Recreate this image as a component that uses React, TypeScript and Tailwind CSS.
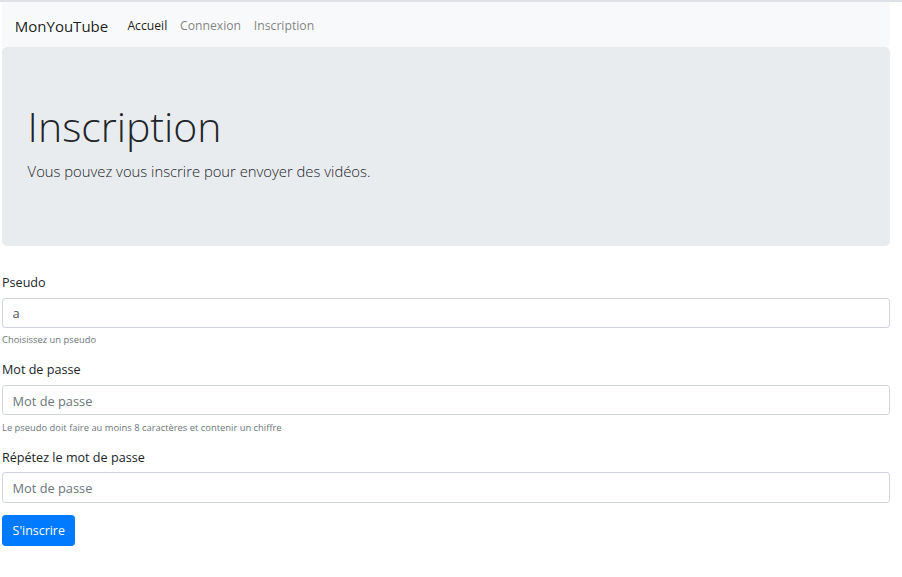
const font = { fontFamily: '"Open Sans", "Noto Sans", sans-serif' };

function Field({
  label,
  value,
  placeholder,
  help,
}: {
  label: string;
  value?: string;
  placeholder?: string;
  help?: string;
}) {
  return (
    <div className="mb-[12.8px]">
      <label className="block pt-[1px] mb-[5.4px] text-[12.6px] leading-[19.2px] text-[#212529]">{label}</label>
      <input
        type="text"
        readOnly
        defaultValue={value}
        placeholder={placeholder}
        className="block w-full h-[30.4px] px-[9.6px] pt-[1px] text-[12.8px] text-[#495057] placeholder:text-[#6c757d] bg-white border border-[#ced4da] rounded-[3.2px] outline-none"
        style={font}
      />
      {help && (
        <small className="block mt-[4.5px] mb-[-1.3px] text-[9.4px] leading-[15.36px] text-[#6c757d]">{help}</small>
      )}
    </div>
  );
}

export default function App() {
  return (
    <div className="min-h-[577px] bg-white border-t-2 border-[#dee2e6]" style={font}>
      <div className="w-[888px] ml-[2px]">
        {/* Navbar */}
        <nav className="h-[45px] flex items-center px-[12.8px] pt-[3px] bg-[#f8f9fa]">
          <span className="text-[15px] text-black/90 mr-[12.8px]">MonYouTube</span>
          <ul className="flex items-center text-[12.2px]">
            <li className="px-[6.4px] text-black/90">Accueil</li>
            <li className="px-[6.4px] text-black/50">Connexion</li>
            <li className="px-[6.4px] text-black/50">Inscription</li>
          </ul>
        </nav>

        {/* Jumbotron */}
        <div className="bg-[#e9ecef] rounded-[4.8px] px-[25.6px] pt-[53.2px] pb-[50.2px] mb-[25.6px]">
          <h1 className="text-[41px] leading-[53.8px] font-light text-[#212529] mb-[5.4px]">Inscription</h1>
          <p className="text-[14.8px] leading-[24px] font-light text-[#212529] mb-[12.8px]">
            Vous pouvez vous inscrire pour envoyer des vidéos.
          </p>
        </div>

        {/* Form */}
        <form>
          <Field label="Pseudo" value="a" help="Choisissez un pseudo" />
          <Field
            label="Mot de passe"
            placeholder="Mot de passe"
            help="Le pseudo doit faire au moins 8 caractères et contenir un chiffre"
          />
          <Field label="Répétez le mot de passe" placeholder="Mot de passe" />
          <button
            type="button"
            className="h-[30.4px] px-[9.6px] pt-[2px] text-[12.4px] text-white bg-[#007bff] border border-[#007bff] rounded-[3.2px]"
          >
            S'inscrire
          </button>
        </form>
      </div>
    </div>
  );
}
